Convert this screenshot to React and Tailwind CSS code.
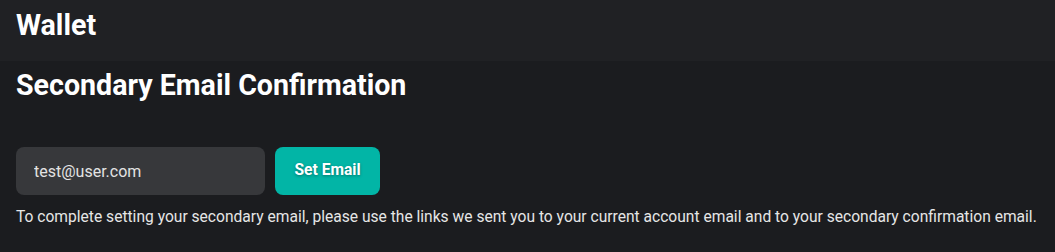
import React from "react";

export default function App() {
  return (
    <div className="min-h-[252px] w-full bg-[#1b1c1f] text-white" style={{ fontFamily: "Roboto, 'Liberation Sans', sans-serif" }}>
      <header className="h-[61px] bg-[#202124] px-4 pt-[8px]">
        <h1 className="text-[28.6px] font-bold leading-[34px] text-white">Wallet</h1>
      </header>
      <main className="px-4">
        <h2 className="pt-[7px] text-[28.6px] font-bold leading-[34px] text-white">Secondary Email Confirmation</h2>
        <div className="mt-[45px] flex gap-[10px]">
          <input
            type="text"
            defaultValue="test@user.com"
            className="h-[48px] w-[249px] rounded-[8px] bg-[#37383b] px-[18px] text-[16px] text-[#e3e3e3] outline-none"
          />
          <button className="h-[48px] w-[105px] rounded-[8px] bg-[#02b5a6] text-[15.6px] font-bold text-white [text-shadow:0_1px_3px_rgba(0,0,0,0.35)]">
            Set Email
          </button>
        </div>
        <p className="mt-[12px] text-[15.6px] leading-[20px] text-[#e6e6e6]">
          To complete setting your secondary email, please use the links we sent you to your current account email and to your secondary confirmation email.
        </p>
      </main>
    </div>
  );
}
